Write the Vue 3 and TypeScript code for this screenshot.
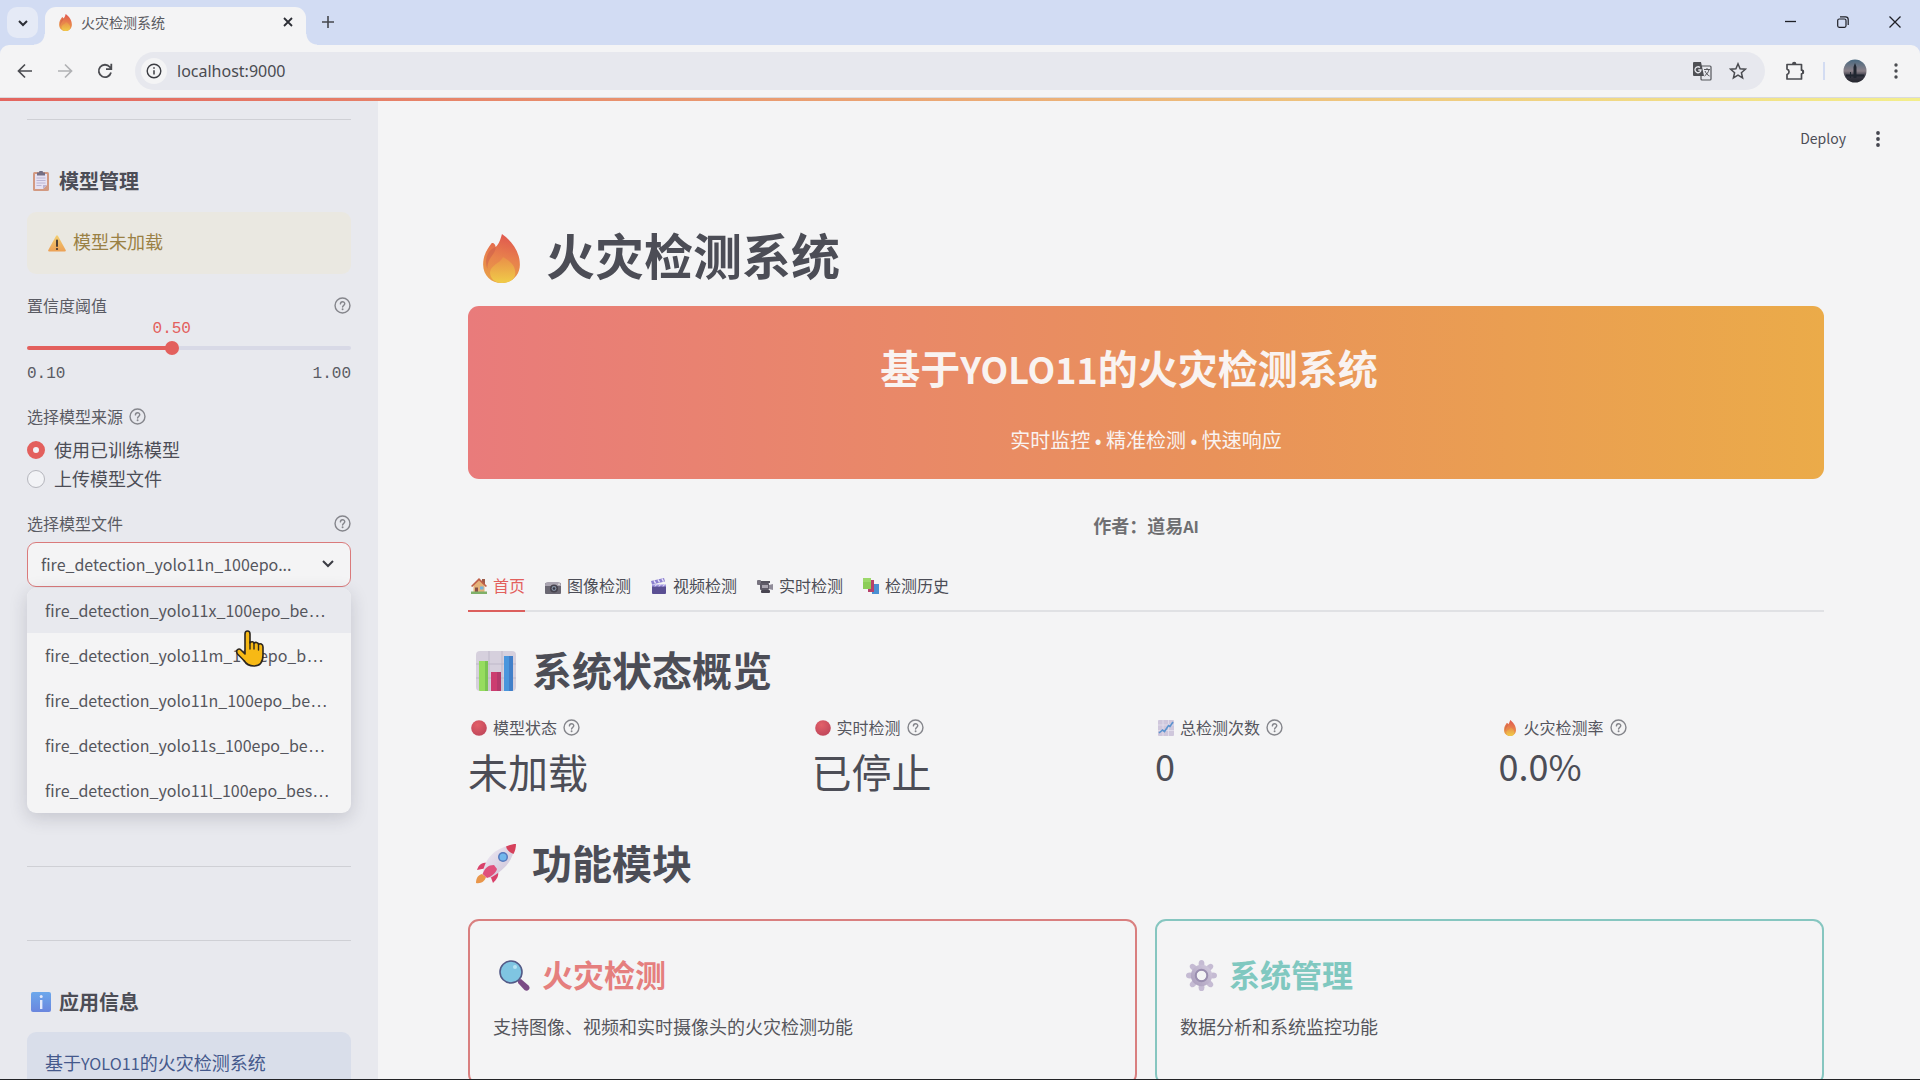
<script setup lang="ts">
import { computed, ref } from 'vue'

interface Tab { id: string; icon: string; label: string }
interface Metric { icon: string; label: string; value: string; latin: boolean }
interface Card { icon: string; title: string; text: string; tone: string }

const tabs: Tab[] = [
  { id: 'home', icon: 'house', label: '首页' },
  { id: 'image', icon: 'camera', label: '图像检测' },
  { id: 'video', icon: 'clapper', label: '视频检测' },
  { id: 'live', icon: 'camcorder', label: '实时检测' },
  { id: 'history', icon: 'chart', label: '检测历史' },
]
const activeTab = ref('home')

const metrics: Metric[] = [
  { icon: 'dot', label: '模型状态', value: '未加载', latin: false },
  { icon: 'dot', label: '实时检测', value: '已停止', latin: false },
  { icon: 'trend', label: '总检测次数', value: '0', latin: true },
  { icon: 'fire', label: '火灾检测率', value: '0.0%', latin: true },
]

const cards: Card[] = [
  { icon: 'lens', title: '火灾检测', text: '支持图像、视频和实时摄像头的火灾检测功能', tone: 'red' },
  { icon: 'gear', title: '系统管理', text: '数据分析和系统监控功能', tone: 'teal' },
]

const models = ['x', 'm', 'n', 's', 'l'].map((s) => `fire_detection_yolo11${s}_100epo_best.pt`)
const model = ref(models[2])
const highlighted = ref(0)
const source = ref('trained')
const address = ref('localhost:9000')

// The closed box has room for the name up to its epoch count.
const shorten = (name: string) => `${name.slice(0, name.indexOf('epo') + 3)}...`

const min = 0.1
const max = 1
const threshold = ref(0.5)
const ratio = computed(() => (threshold.value - min) / (max - min))
const fill = computed(() => ({ '--fill': `${ratio.value * 100}%` }))
const bubble = computed(() => ({ left: `calc(7px + (100% - 14px) * ${ratio.value})` }))
</script>

<template>
  <div class="window">
    <svg class="sprite" aria-hidden="true">
      <defs>
        <linearGradient id="g-fire" x1="0.6" y1="0" x2="0.4" y2="1">
          <stop offset="0" stop-color="#e0574f" /><stop offset="0.5" stop-color="#e8824c" /><stop offset="1" stop-color="#e9a047" />
        </linearGradient>
        <linearGradient id="g-core" x1="0.5" y1="0" x2="0.5" y2="1">
          <stop offset="0" stop-color="#e98f49" /><stop offset="1" stop-color="#f0cc48" />
        </linearGradient>
        <radialGradient id="g-dot" cx="0.4" cy="0.3" r="0.8">
          <stop offset="0" stop-color="#e26069" /><stop offset="1" stop-color="#bd4459" />
        </radialGradient>
        <linearGradient id="g-gear" x1="1" y1="0" x2="0" y2="1">
          <stop offset="0" stop-color="#d5cde0" /><stop offset="1" stop-color="#a89bba" />
        </linearGradient>
        <linearGradient id="g-info" x1="0" y1="0" x2="0" y2="1">
          <stop offset="0" stop-color="#6ca8ec" /><stop offset="1" stop-color="#6a86de" />
        </linearGradient>
        <linearGradient id="g-warn" x1="0" y1="0" x2="0" y2="1">
          <stop offset="0" stop-color="#f3cf71" /><stop offset="1" stop-color="#eca055" />
        </linearGradient>
        <linearGradient id="g-hull" x1="0" y1="0" x2="1" y2="1">
          <stop offset="0" stop-color="#f1ecf6" /><stop offset="1" stop-color="#c9bfd4" />
        </linearGradient>
        <linearGradient id="g-sky" x1="0" y1="0" x2="0" y2="1">
          <stop offset="0" stop-color="#48687f" /><stop offset="0.5" stop-color="#8a8088" /><stop offset="0.7" stop-color="#3a3a46" /><stop offset="1" stop-color="#25262e" />
        </linearGradient>
      </defs>
      <symbol id="fire" viewBox="0 0 32 32">
        <path d="M9.500 6C11 5.500 12 7 12.200 8.500 14.500 6.500 15.500 3 16.300 0c5 3.500 11.700 10.500 11.700 20 0 7-5.500 12-12 12S4 27 4 20C4 13.500 7 9.500 9.500 6z" fill="url(#g-fire)" />
        <path d="M12.200 8.500C12 14 6.500 15 6.800 23 5 18 6 13 9.500 10z" fill="#cf604b" opacity="0.6" />
        <path d="M17 15c4 2.500 8 5 8 10.500 0 4-3.500 6.500-8.500 6.500S8.500 29 8.500 25C9 20 15 19.500 17 15z" fill="url(#g-core)" />
      </symbol>
      <symbol id="clipboard" viewBox="0 0 20 20">
        <rect x="2" y="1" width="16" height="19" rx="1.500" fill="#d39a82" />
        <path d="M4 3h12v11l-4 4H4z" fill="#e6e2f2" /><path d="M12 18v-4h4z" fill="#bdb3d0" />
        <path d="M6 1.500h2a2 2 0 0 1 4 0h2v3H6z" fill="#746f84" />
        <path d="M5.500 7h9M5.500 9.500h9M5.500 12h9M5.500 14.500h5" stroke="#b0a9cb" stroke-width="0.8" />
      </symbol>
      <symbol id="warning" viewBox="0 0 18 18">
        <path d="M8 2q1-1.600 2 0l7.700 14q.6 1.500-1 1.500H1.300q-1.600 0-1-1.500z" fill="url(#g-warn)" />
        <path d="M9 6.500v5.500" stroke="#3e3330" stroke-width="1.800" stroke-linecap="round" /><circle cx="9" cy="15" r="1.100" fill="#3e3330" />
      </symbol>
      <symbol id="info" viewBox="0 0 20 20">
        <rect width="20" height="20" rx="2" fill="url(#g-info)" />
        <rect x="9" y="8" width="2.400" height="9" fill="#e4e9fb" /><circle cx="10.200" cy="4.600" r="1.500" fill="#e4e9fb" />
      </symbol>
      <symbol id="house" viewBox="0 0 16 16">
        <path d="M11 1h3v5h-3z" fill="#9c5a48" /><path d="M2.500 7L8 2l5.500 5v7.500h-11z" fill="#e5b27a" />
        <path d="M0 8L8 0l8 8-1.200 1L8 2.600 1.200 9z" fill="#bf5f48" />
        <path d="M4 9.500h3v5H4z" fill="#875047" /><path d="M9 8.500h3.500v3H9z" fill="#72b4df" /><path d="M0 13.500h16V16H0z" fill="#7fb069" />
      </symbol>
      <symbol id="camera" viewBox="0 0 16 16">
        <rect x="0" y="5" width="16" height="11" rx="1" fill="#6a6772" /><path d="M0 7q0-3 3-3h10q3 0 3 3v1H0z" fill="#aaa5b1" />
        <circle cx="9" cy="10.500" r="4" fill="#46434e" /><circle cx="9" cy="10.500" r="2.400" fill="#8794a6" /><circle cx="9" cy="10.500" r="1.300" fill="#363542" />
        <circle cx="14" cy="6.200" r=".8" fill="#f1f0e8" />
      </symbol>
      <symbol id="clapper" viewBox="0 0 16 16">
        <rect x="1" y="7" width="14" height="9" rx="1" fill="#5a4f93" /><path d="M0 3l13-3 1 3.500L1 6.500z" fill="#8c80cf" />
        <path d="M3 2.400l1.500 3M7 1.400l1.500 3M11 .6l1.500 3" stroke="#e8e4fa" stroke-width="1.300" /><path d="M1 6.500h14v2H1z" fill="#9f94de" />
        <path d="M4 8.500l1.500-2M8 8.500l1.500-2M12 8.500l1.500-2" stroke="#e8e4fa" />
      </symbol>
      <symbol id="camcorder" viewBox="0 0 16 16">
        <path d="M3 3h10v2H3z" fill="#55525e" /><rect x="0" y="2" width="4" height="5" rx="1" fill="#77737f" />
        <rect x="3" y="5" width="9" height="7" rx="1" fill="#5e5a67" /><rect x="5" y="7" width="6" height="3" fill="#aaa5b0" />
        <path d="M12 7l4-1v6l-4-1z" fill="#8f8b98" /><rect x="4" y="12" width="9" height="3" rx="1" fill="#484551" />
      </symbol>
      <symbol id="chart" viewBox="0 0 16 16">
        <path d="M10 6h6v10H9v-3h1z" fill="#4a8fd2" /><rect x="5" y="2" width="6" height="12" fill="#b7416c" />
        <rect x="0" y="0" width="8" height="11" fill="#8ccd58" /><path d="M0 0h8v4H0z" fill="#9cd86a" />
      </symbol>
      <symbol id="bars" viewBox="0 0 40 40">
        <rect width="40" height="40" rx="4" fill="#d6d0dd" />
        <path d="M13 0v40M26 0v40M0 13h40M0 27h40" stroke="#b9b2c5" stroke-width="0.8" />
        <path d="M3 10h9v30H4q-1 0-1-1z" fill="#96dc5e" /><path d="M9 10h3v30H9z" fill="#7cc453" />
        <path d="M15 21h10v19H15z" fill="#cc3e70" /><path d="M21 21h4v19h-4z" fill="#b53a6b" />
        <path d="M28 5h9v34q0 1-1 1h-8z" fill="#4a96dd" /><path d="M33 5h4v34q0 1-1 1h-3z" fill="#417fc9" />
      </symbol>
      <symbol id="dot" viewBox="0 0 16 16"><circle cx="8" cy="8" r="7.800" fill="url(#g-dot)" /></symbol>
      <symbol id="trend" viewBox="0 0 16 16">
        <rect width="16" height="16" rx="1" fill="#cfc7dc" /><path d="M0 5h16M0 10.500h16M5 0v16M10.500 0v16" stroke="#e6e1ee" stroke-width="0.8" />
        <path d="M1 13l3.500-3 2 1.500 4-6 1.500 1L15 2" fill="none" stroke="#5b93cf" stroke-width="1.600" />
      </symbol>
      <symbol id="rocket" viewBox="0 0 40 40">
        <path d="M6 30c-4 1-6 4-6 9 5 1 9-2 10-6z" fill="#e9964a" />
        <path d="M14 19C8 18 3 19 1 26l10-2zM22 27c1 5-1 8-5 12l-3-8z" fill="#d9416a" />
        <path d="M7 28C9 13 22 2 38 1c1 13-9 25-24 33z" fill="url(#g-hull)" />
        <path d="M30 2.500C33 1 37 0 40 0c0 4-1 7-2.500 10C34 9 31 6 30 2.500z" fill="#d6415b" />
        <circle cx="27" cy="13" r="5" fill="#5579bd" /><circle cx="27" cy="13" r="3.500" fill="#72b7ec" />
        <path d="M18 21C12 21 9 24 6.500 30l4.500 4c6-2 9-6 10-9z" fill="#e0507c" />
      </symbol>
      <symbol id="lens" viewBox="0 0 31 31">
        <path d="M19 20l3-1 7.500 6.500c3 3-1 7-4 4.500L19 23z" fill="#7b4b86" />
        <circle cx="12" cy="12" r="11" fill="#7fc5e2" stroke="#535a87" stroke-width="1.600" />
        <circle cx="16" cy="7" r="2" fill="#b7e4f2" />
      </symbol>
      <symbol id="gear" viewBox="0 0 32 32">
        <g fill="#c5bbd3">
          <ellipse v-for="n in 8" :key="n" cx="16" cy="4" rx="3" ry="4" :transform="`rotate(${n * 45} 16 16)`" />
        </g>
        <path fill-rule="evenodd" d="M16 5a11 11 0 1 0 0 22 11 11 0 0 0 0-22zm0 6a5 5 0 1 1 0 10 5 5 0 0 1 0-10z" fill="url(#g-gear)" />
        <circle cx="16" cy="16" r="6" fill="none" stroke="#9a8eaf" stroke-width="2" />
      </symbol>
      <symbol id="help" viewBox="0 0 18 18">
        <g fill="none" stroke="#85868c" stroke-width="1.500">
          <circle cx="9" cy="9" r="7.900" />
          <path d="M6.800 7.300c0-3 4.600-3 4.600-.2 0 1.700-2.300 1.800-2.300 3.600" stroke-linecap="round" />
        </g>
        <circle cx="9.100" cy="13" r="1" fill="#85868c" />
      </symbol>
    </svg>

    <header class="tabstrip">
      <button class="search-tabs" aria-label="搜索标签页">
        <svg width="12" height="12" viewBox="0 0 12 12"><path d="M2 4l4 4 4-4" fill="none" stroke="#2c2e35" stroke-width="2" /></svg>
      </button>
      <div class="browser-tab">
        <svg class="favicon"><use href="#fire" /></svg>
        <span>火灾检测系统</span>
        <button class="plain" aria-label="关闭">
          <svg width="12" height="12" viewBox="0 0 12 12"><path d="M2 2l8 8M10 2l-8 8" stroke="#2c2e35" stroke-width="1.800" /></svg>
        </button>
      </div>
      <button class="plain new-tab" aria-label="新标签页">
        <svg width="12" height="12" viewBox="0 0 12 12"><path d="M6 0v12M0 6h12" stroke="#45474d" stroke-width="1.600" /></svg>
      </button>
      <div class="controls">
        <button class="plain" aria-label="最小化"><svg width="12" height="12" viewBox="0 0 12 12"><path d="M0 5.500h11" stroke="#1f2026" stroke-width="1.300" /></svg></button>
        <button class="plain" aria-label="还原">
          <svg width="12" height="12" viewBox="0 0 12 12" fill="none" stroke="#1f2026" stroke-width="1.200"><rect x=".7" y="3" width="8.300" height="8.300" rx="1.500" /><path d="M3 .8h5.500a2.700 2.700 0 0 1 2.700 2.700V9" /></svg>
        </button>
        <button class="plain" aria-label="关闭窗口"><svg width="12" height="12" viewBox="0 0 12 12"><path d="M.5.5l11 11M11.500.5l-11 11" stroke="#1f2026" stroke-width="1.300" /></svg></button>
      </div>
    </header>

    <nav class="toolbar">
      <button class="plain tool" aria-label="后退"><svg width="16" height="16" viewBox="0 0 16 16" fill="none" stroke="#4a4b50" stroke-width="1.700"><path d="M15 8H2M8 1.500L1.500 8 8 14.500" /></svg></button>
      <button class="plain tool" aria-label="前进"><svg width="16" height="16" viewBox="0 0 16 16" fill="none" stroke="#b0b1b4" stroke-width="1.700"><path d="M1 8h13M8 1.500L14.500 8 8 14.500" /></svg></button>
      <button class="plain tool" aria-label="刷新"><svg width="16" height="16" viewBox="0 0 16 16" fill="none" stroke="#4a4b50" stroke-width="1.800"><path d="M14 9.500A6.200 6.200 0 1 1 12.800 4l1.200 1.500M14.300.8v5.400H9" /></svg></button>
      <div class="address">
        <button class="plain site-info" aria-label="网站信息"><svg width="16" height="16" viewBox="0 0 16 16"><circle cx="8" cy="8" r="6.800" fill="none" stroke="#3b3c42" stroke-width="1.400" /><path d="M8 7.200v4.300M8 4.300v1.500" stroke="#3b3c42" stroke-width="1.500" /></svg></button>
        <input v-model="address" aria-label="地址" spellcheck="false" />
        <button class="plain" aria-label="翻译">
          <svg width="20" height="20" viewBox="0 0 20 20"><rect x="9" y="5" width="10" height="14" rx="1" fill="none" stroke="#55565b" stroke-width="1.200" /><path d="M12 8.500h6M15 7v1.500M17 8.500c-.5 3-2.500 5-4.500 6.500M13 10c1 2.500 2.500 4 4.500 5" fill="none" stroke="#55565b" /><path d="M2 1h7l3 14H2a1 1 0 0 1-1-1V2a1 1 0 0 1 1-1z" fill="#4e4f54" /><path d="M8 6.500A3 3 0 1 0 9 9H6.300" fill="none" stroke="#e7e8ee" stroke-width="1.300" /></svg>
        </button>
        <button class="plain star" aria-label="收藏">
          <svg width="18" height="18" viewBox="0 0 18 18"><path d="M9 1.800l2.100 4.900 5.300.5-4 3.500 1.200 5.200L9 13.200l-4.600 2.700 1.200-5.200-4-3.500 5.300-.5z" fill="none" stroke="#4a4b50" stroke-width="1.500" /></svg>
        </button>
      </div>
      <button class="plain" aria-label="扩展程序">
        <svg width="20" height="20" viewBox="0 0 20 20"><path d="M2 3.500h14.500v5.700a1.800 1.800 0 0 1 0 3.600V18H2v-4.500a2.800 2.800 0 0 0 0-5.400z" fill="none" stroke="#4a4b50" stroke-width="1.700" stroke-linejoin="round" /><path d="M7 3a2.200 2.200 0 0 1 4.400 0zM17 8.800a2.200 2.200 0 0 1 0 4.400z" fill="#4a4b50" /></svg>
      </button>
      <i class="separator"></i>
      <button class="plain" aria-label="个人资料">
        <svg width="24" height="24" viewBox="0 0 24 24"><circle cx="12" cy="12" r="11.500" fill="url(#g-sky)" /><path d="M10.500 19V8l1.500-4 1.500 4v11zM7 19v-6h1v6zM3 15.500h18v2H3z" fill="#202630" /></svg>
      </button>
      <button class="plain menu" aria-label="菜单"><svg width="4" height="16" viewBox="0 0 4 16" fill="#4a4b50"><circle cx="2" cy="2" r="1.700" /><circle cx="2" cy="8" r="1.700" /><circle cx="2" cy="14" r="1.700" /></svg></button>
    </nav>
    <div class="decoration"></div>

    <div class="app">
      <aside class="sidebar">
        <hr />
        <h2><svg><use href="#clipboard" /></svg>模型管理</h2>
        <div class="alert"><svg><use href="#warning" /></svg>模型未加载</div>

        <div class="field-label spread threshold-label">
          <label for="threshold">置信度阈值</label>
          <svg class="help"><use href="#help" /></svg>
        </div>
        <div class="bubble-row"><output for="threshold" :style="bubble">{{ threshold.toFixed(2) }}</output></div>
        <input id="threshold" v-model.number="threshold" class="slider" type="range" :min="min" :max="max" step="0.05" :style="fill" />
        <div class="range-ends"><span>0.10</span><span>1.00</span></div>

        <fieldset>
          <legend class="field-label">选择模型来源<svg class="help"><use href="#help" /></svg></legend>
          <label class="radio"><input v-model="source" type="radio" value="trained" />使用已训练模型</label>
          <label class="radio"><input v-model="source" type="radio" value="upload" />上传模型文件</label>
        </fieldset>

        <div class="field-label spread model-label">
          <label for="model">选择模型文件</label>
          <svg class="help"><use href="#help" /></svg>
        </div>
        <div class="select-wrap">
          <select id="model" v-model="model">
            <option v-for="name in models" :key="name" :value="name">{{ shorten(name) }}</option>
          </select>
          <svg class="chevron" viewBox="0 0 12 8"><path d="M1 1l5 5 5-5" fill="none" stroke="#3b3c44" stroke-width="2" /></svg>
          <ul class="dropdown" role="listbox">
            <li v-for="(name, i) in models" :key="name" role="option" :aria-selected="name === model" :class="{ on: i === highlighted }" @mouseenter="highlighted = i" @click="model = name"><span>{{ name }}</span></li>
          </ul>
          <svg class="pointer" viewBox="0 0 30 38">
            <path d="M10 4c0-4 5-4 5 0v9c1-2 4-1.500 4 .5 1-2 4.500-1 4.500 1 1.500-1.500 4.500-.5 4.500 2.500V25c0 7-3 11-9 11-5 0-8-2-10-5.500L2.500 24C0 19.500 4 18 6 20l4 4z" fill="#f7b915" stroke="#2c2620" stroke-width="1.600" stroke-linejoin="round" />
            <path d="M15 12v7M19 13.500V19M23.500 15v5" stroke="#2c2620" stroke-width="1.400" stroke-linecap="round" />
          </svg>
        </div>

        <hr class="after-model" />
        <hr class="after-actions" />
        <h2><svg><use href="#info" /></svg>应用信息</h2>
        <div class="note">基于<span class="latin">YOLO11</span>的火灾检测系统</div>
      </aside>

      <main>
        <div class="app-bar">
          <button class="plain deploy">Deploy</button>
          <button class="plain" aria-label="更多"><svg width="4" height="16" viewBox="0 0 4 16" fill="#45464f"><circle cx="2" cy="2" r="1.900" /><circle cx="2" cy="8" r="1.900" /><circle cx="2" cy="14" r="1.900" /></svg></button>
        </div>
        <div class="content">
          <h1 class="title"><svg><use href="#fire" /></svg>火灾检测系统</h1>
          <section class="banner">
            <h2>基于<span class="latin">YOLO11</span>的火灾检测系统</h2>
            <p>实时监控 • 精准检测 • 快速响应</p>
          </section>
          <p class="author">作者：道易<span class="latin">AI</span></p>

          <div class="tabs" role="tablist">
            <button v-for="t in tabs" :key="t.id" class="tab" role="tab" :aria-selected="t.id === activeTab" :class="{ active: t.id === activeTab }" @click="activeTab = t.id">
              <svg class="mini"><use :href="`#${t.icon}`" /></svg>{{ t.label }}
            </button>
          </div>

          <h2 class="section"><svg><use href="#bars" /></svg>系统状态概览</h2>
          <div class="metrics">
            <div v-for="m in metrics" :key="m.label">
              <div class="metric-label"><svg class="mini"><use :href="`#${m.icon}`" /></svg>{{ m.label }}<svg class="help"><use href="#help" /></svg></div>
              <div class="metric-value" :class="{ number: m.latin }">{{ m.value }}</div>
            </div>
          </div>

          <h2 class="section modules"><svg><use href="#rocket" /></svg>功能模块</h2>
          <div class="cards">
            <article v-for="c in cards" :key="c.title" class="card" :class="c.tone">
              <h3><svg><use :href="`#${c.icon}`" /></svg>{{ c.title }}</h3>
              <p>{{ c.text }}</p>
            </article>
          </div>
        </div>
      </main>
    </div>
    <div class="taskbar-edge"></div>
  </div>
</template>

<style>
body { margin: 0; overflow: hidden; }
</style>

<style scoped>
* { box-sizing: border-box; }
.window {
  height: 100vh; display: flex; flex-direction: column; overflow: hidden;
  background: #f4f4f5; color: #4c4d56;
  font-family: "Noto Sans CJK SC", "Noto Sans", sans-serif; font-size: 18px;
}
.sprite { position: absolute; width: 0; height: 0; }
h1, h2, h3, p, ul, fieldset, legend { margin: 0; padding: 0; }
svg { flex: none; }
button { font: inherit; color: inherit; cursor: pointer; }
.plain { display: flex; align-items: center; justify-content: center; background: none; border: 0; padding: 0; }
.latin { font-size: 0.9em; line-height: 1; }

.tabstrip { flex: none; height: 45px; display: flex; background: #d2dcf3; padding: 7px 0 0 7px; }
.search-tabs { width: 31px; height: 31px; padding: 0; border: 0; border-radius: 10px; background: #e5eaf6; display: flex; align-items: center; justify-content: center; }
.browser-tab {
  position: relative; margin-left: 7px; width: 261px; height: 38px; padding: 0 12px 8px; border-radius: 11px 11px 0 0;
  background: #f4f4f5; display: flex; align-items: center; font-size: 14px; line-height: 30px; color: #5a5b61;
}
.browser-tab::before, .browser-tab::after { content: ""; position: absolute; bottom: 0; width: 11px; height: 11px; }
.browser-tab::before { left: -11px; background: radial-gradient(circle at 0 0, transparent 10px, #f4f4f5 11px); }
.browser-tab::after { right: -11px; background: radial-gradient(circle at 100% 0, transparent 10px, #f4f4f5 11px); }
.browser-tab span { flex: 1; }
.favicon { width: 17px; height: 17px; margin-right: 7px; }
.new-tab { width: 12px; height: 30px; margin-left: 16px; }
.controls { margin-left: auto; display: flex; gap: 40px; padding-right: 19px; height: 30px; }

.toolbar { flex: none; height: 53px; display: flex; align-items: center; padding: 0 22px 0 17px; border-bottom: 1px solid #d9dade; background: linear-gradient(#d2dcf3, #d2dcf3) 0 0 / 100% 10px no-repeat; position: relative; isolation: isolate; }
.toolbar::before { content: ""; position: absolute; inset: 0; z-index: -1; background: #f4f4f5; border-radius: 9px 9px 0 0; }
.tool { width: 16px; margin-right: 24px; }
.tool:nth-of-type(3) { margin-right: 22px; }
.address { flex: 1; height: 38px; border-radius: 19px; background: #e7e8ee; display: flex; align-items: center; padding: 0 18px 0 6px; }
.site-info { width: 26px; height: 26px; border-radius: 50%; background: #f4f4f5; }
.address input { flex: 1; min-width: 0; margin-left: 10px; border: 0; padding: 0; background: none; outline: 0; color: #4a4b51; font: 16px/26px "Noto Sans", sans-serif; }
.star { margin-left: 17px; }
.toolbar > .address { margin-right: 20px; }
.separator { width: 2px; height: 18px; background: #d3dcf2; margin: 0 18px; }
.menu { margin-left: 27px; }
.decoration { flex: none; height: 3px; background: linear-gradient(90deg, #e3655f, #f3ee8c); }

.app { flex: 1; min-height: 0; display: flex; overflow: hidden; }
.sidebar { flex: none; width: 378px; background: #e8e9ee; padding: 18px 27px 0; }
hr { margin: 0; border: 0; height: 1px; background: #cfd0d5; }
.after-model { margin-top: 279px; }
.after-actions { margin-top: 73px; }
.sidebar h2 { display: flex; align-items: center; margin-top: 46px; font-size: 20px; line-height: 30px; }
.sidebar h2 svg { width: 20px; height: 20px; margin: 0 8px 0 4px; }
.alert { margin-top: 16px; height: 62px; padding: 0 21px 4px; border-radius: 9px; background: #eae8e1; color: #9a8145; display: flex; align-items: center; line-height: 28px; }
.alert svg { width: 18px; height: 18px; margin: 4px 7px 0 0; }
.field-label { display: flex; align-items: center; font-size: 16px; line-height: 20px; height: 20px; color: #5a5b63; }
.spread { justify-content: space-between; }
.help { width: 17px; height: 17px; }
.threshold-label { margin-top: 21px; }
.bubble-row { position: relative; height: 20px; margin-top: 4px; }
.bubble-row output { position: absolute; transform: translateX(-50%); color: #e3605d; font: 16px/20px "Liberation Mono", monospace; }
.slider { appearance: none; display: block; width: 100%; height: 14px; margin: 2px 0 0; background: none; }
.slider::-webkit-slider-runnable-track { height: 4px; border-radius: 2px; background: linear-gradient(90deg, #e3605d var(--fill), #d8d9e6 var(--fill)); }
.slider::-webkit-slider-thumb { appearance: none; width: 14px; height: 14px; margin-top: -5px; border-radius: 50%; background: #e3605d; }
.range-ends { display: flex; justify-content: space-between; margin-top: 9px; font: 16px/20px "Liberation Mono", monospace; color: #5a5b63; }
fieldset { border: 0; margin-top: 22px; min-width: 0; display: flex; flex-direction: column; gap: 2px; }
legend { margin-bottom: 10px; }
legend .help { margin-left: 6px; }
.radio { display: flex; align-items: center; line-height: 27px; }
.radio input { appearance: none; flex: none; width: 18px; height: 18px; margin: 0 9px 0 0; border: 1px solid #b5b6bd; border-radius: 50%; background: #f2f3f6; }
.radio input:checked { border: 6px solid #e3605d; }
.model-label { margin-top: 21px; }
.select-wrap { position: relative; margin-top: 9px; }
select { appearance: none; display: block; width: 100%; height: 45px; padding: 0 44px 2px 13px; border: 1px solid #da7a7b; border-radius: 9px; background: #f4f4f5; color: #55565d; outline: 0; font: 16px/28px "Noto Sans CJK SC", sans-serif; }
.chevron { position: absolute; right: 17px; top: 18px; width: 12px; height: 8px; pointer-events: none; }
.dropdown { position: absolute; top: 46px; left: 0; right: 0; list-style: none; overflow: hidden; border-radius: 9px; background: #f4f4f5; color: #55565d; box-shadow: 0 5px 18px rgba(40, 40, 60, 0.18); font: 18px/45px "Liberation Sans", sans-serif; }
.dropdown li { height: 45px; padding: 0 20px 0 18px; overflow: hidden; text-overflow: ellipsis; white-space: nowrap; }
.dropdown span { font-family: "Noto Sans CJK SC", sans-serif; font-size: 16px; }
.dropdown .on { background: #e8e9ee; }
.pointer { position: absolute; left: 208px; top: 88px; width: 30px; height: 38px; }
.note { margin-top: 15px; padding: 17px 18px 27px; border-radius: 9px; background: #d9deea; color: #45598c; line-height: 27px; }

main { flex: 1; min-width: 0; }
.app-bar { height: 76px; display: flex; justify-content: flex-end; align-items: center; gap: 30px; padding-right: 40px; }
.deploy { font-size: 14px; line-height: 24px; padding-bottom: 2px; }
.content { padding: 0 96px 0 90px; }
.title { display: flex; align-items: center; margin-top: 47px; font-size: 49px; line-height: 60px; }
.title svg { width: 49px; height: 49px; margin: 8px 20px 0 9px; }
.banner { margin-top: 22px; padding: 39px 20px 24px; border-radius: 11px; text-align: center; color: #f9f3f1; background: linear-gradient(90deg, #e97b7b, #e9925a 55%, #ebab49); }
.banner h2 { padding-right: 34px; font-size: 40px; line-height: 44px; }
.banner p { margin-top: 36px; font-size: 20px; line-height: 30px; font-family: "Noto Sans CJK KR", "Noto Sans CJK SC", sans-serif; }
.author { margin-top: 33px; text-align: center; font-weight: 700; line-height: 27px; color: #6f6f72; }
.tabs { margin-top: 27px; display: flex; gap: 17px; box-shadow: inset 0 -2px #e0e1e4; }
.tab { display: flex; align-items: center; height: 46px; padding: 0 0 6px; border: 0; border-bottom: 2px solid transparent; background: none; font-size: 16px; line-height: 24px; }
.tab.active { color: #e3605d; border-color: #dc5f5d; }
.mini { width: 16px; height: 16px; margin: 2px 6px 0 3px; }
.section { display: flex; align-items: center; margin-top: 33px; font-size: 40px; line-height: 48px; }
.section svg { width: 40px; height: 40px; margin: 4px 16px 0 8px; }
.modules { margin-top: 37px; }
.metrics { display: grid; grid-template-columns: repeat(4, 1fr); gap: 18px; margin-top: 22px; }
.metric-label { display: flex; align-items: center; font-size: 16px; line-height: 24px; color: #55565e; }
.metric-label .help { margin-left: 6px; }
.metric-value { margin-top: 2px; font-size: 40px; line-height: 60px; }
.metric-value.number { font-size: 36px; line-height: 48px; }
.cards { display: grid; grid-template-columns: 1fr 1fr; gap: 18px; margin-top: 33px; }
.card { padding: 34px 23px 43px; border: 2px solid; border-radius: 11px; }
.card h3 { display: flex; align-items: center; font-size: 31px; line-height: 38px; }
.card h3 svg { width: 31px; height: 31px; margin: 3px 12px 0 6px; }
.card p { margin-top: 19px; line-height: 28px; color: #55565c; }
.red { border-color: #d97f7f; }
.red h3 { color: #e57f7e; }
.teal { border-color: #86c6c0; }
.teal h3 { color: #80c8c0; }
.taskbar-edge { flex: none; height: 1px; background: #222326; }
</style>
